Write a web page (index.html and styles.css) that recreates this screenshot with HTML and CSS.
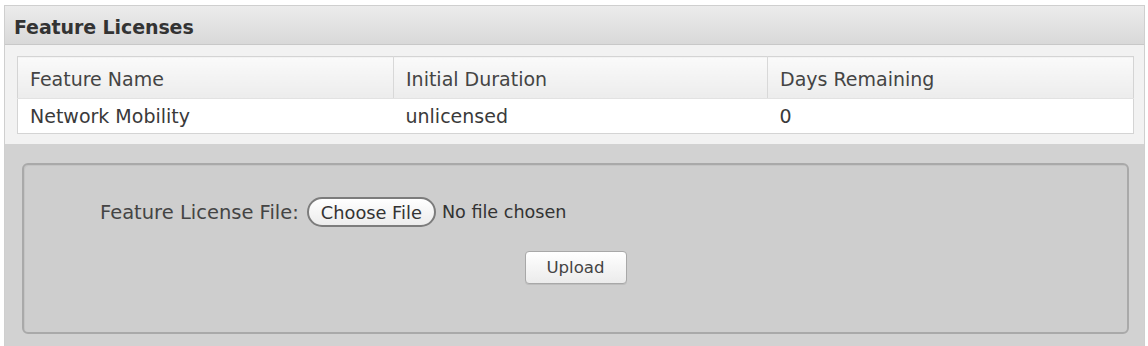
FILE: index.html
```html
<!DOCTYPE html>
<html>
<head>
<meta charset="utf-8">
<link rel="stylesheet" href="styles.css">
</head>
<body>
<div class="panel">
  <div class="panel-header">Feature Licenses</div>
  <div class="panel-top">
    <table class="licenses">
      <colgroup>
        <col class="col-name">
        <col class="col-duration">
        <col>
      </colgroup>
      <thead>
        <tr><th>Feature Name</th><th>Initial Duration</th><th>Days Remaining</th></tr>
      </thead>
      <tbody>
        <tr><td>Network Mobility</td><td>unlicensed</td><td>0</td></tr>
      </tbody>
    </table>
  </div>
  <div class="panel-bottom">
    <div class="form-box">
      <div class="file-row">
        <span class="file-label">Feature License File:</span>
        <span class="choose-btn">Choose File</span>
        <span class="file-status">No file chosen</span>
      </div>
      <div class="upload-row">
        <span class="upload-btn">Upload</span>
      </div>
    </div>
  </div>
</div>
</body>
</html>
```
FILE: styles.css
```css
html, body {
  margin: 0;
  padding: 0;
  background: #ffffff;
  font-family: "DejaVu Sans", "Liberation Sans", sans-serif;
  color: #3a3a3a;
}
.panel {
  margin: 5px 3px 0 4px;
  border: 1px solid #cfcfcf;
  border-bottom: none;
  height: 341px;
  box-sizing: border-box;
  display: flex;
  flex-direction: column;
}
.panel-header {
  height: 40px;
  box-sizing: border-box;
  padding: 3px 0 0 9px;
  display: flex;
  align-items: center;
  font-weight: bold;
  font-size: 19px;
  letter-spacing: -0.1px;
  color: #333;
  background: linear-gradient(#ececec, #d9d9d9);
  border-bottom: 1px solid #c8c8c8;
}
.panel-top {
  background: #f2f2f2;
  padding: 11px 10px 10px 12px;
}
.licenses {
  width: 100%;
  border-collapse: collapse;
  table-layout: fixed;
  font-size: 19px;
  background: #fff;
  border: 1px solid #d4d4d4;
}
.col-name { width: 376px; }
.col-duration { width: 374px; }
.licenses th {
  font-weight: normal;
  text-align: left;
  height: 39px;
  padding: 2px 12px 0;
  color: #444;
  background: linear-gradient(#fafafa, #ececec);
  border-right: 1px solid #d8d8d8;
  border-bottom: 1px solid #e2e2e2;
}
.licenses th:last-child { border-right: none; }
.licenses td {
  height: 34px;
  padding: 0 12px;
  color: #3a3a3a;
  background: #fff;
}
.panel-bottom {
  flex: 1;
  background: #d2d2d2;
  padding: 19px 15px 12px 17px;
}
.form-box {
  height: 171px;
  box-sizing: border-box;
  border: 2px solid #a9a9a9;
  border-radius: 6px;
  background: #cecece;
  box-shadow: inset 1px 1px 0 #c4c4c4;
  padding-top: 32px;
}
.file-row {
  display: flex;
  align-items: center;
  height: 30px;
  padding-left: 76px;
}
.file-label {
  font-size: 19.5px;
  color: #444;
  margin-right: 8px;
}
.choose-btn {
  display: inline-flex;
  align-items: center;
  height: 30px;
  box-sizing: border-box;
  padding: 0 12px;
  border: 2px solid #7c7c7c;
  border-radius: 15px;
  background: linear-gradient(#ffffff, #ececec);
  font-size: 17.8px;
  color: #333;
}
.file-status {
  margin-left: 6px;
  font-size: 17.6px;
  color: #333;
}
.upload-row {
  display: flex;
  justify-content: center;
  margin-top: 24px;
}
.upload-btn {
  display: inline-flex;
  align-items: center;
  justify-content: center;
  width: 102px;
  height: 33px;
  box-sizing: border-box;
  border: 1px solid #a8a8a8;
  border-radius: 4px;
  background: linear-gradient(#ffffff, #ebebeb);
  box-shadow: 0 1px 0 #bdbdbd;
  font-size: 16.6px;
  color: #444;
}
```
